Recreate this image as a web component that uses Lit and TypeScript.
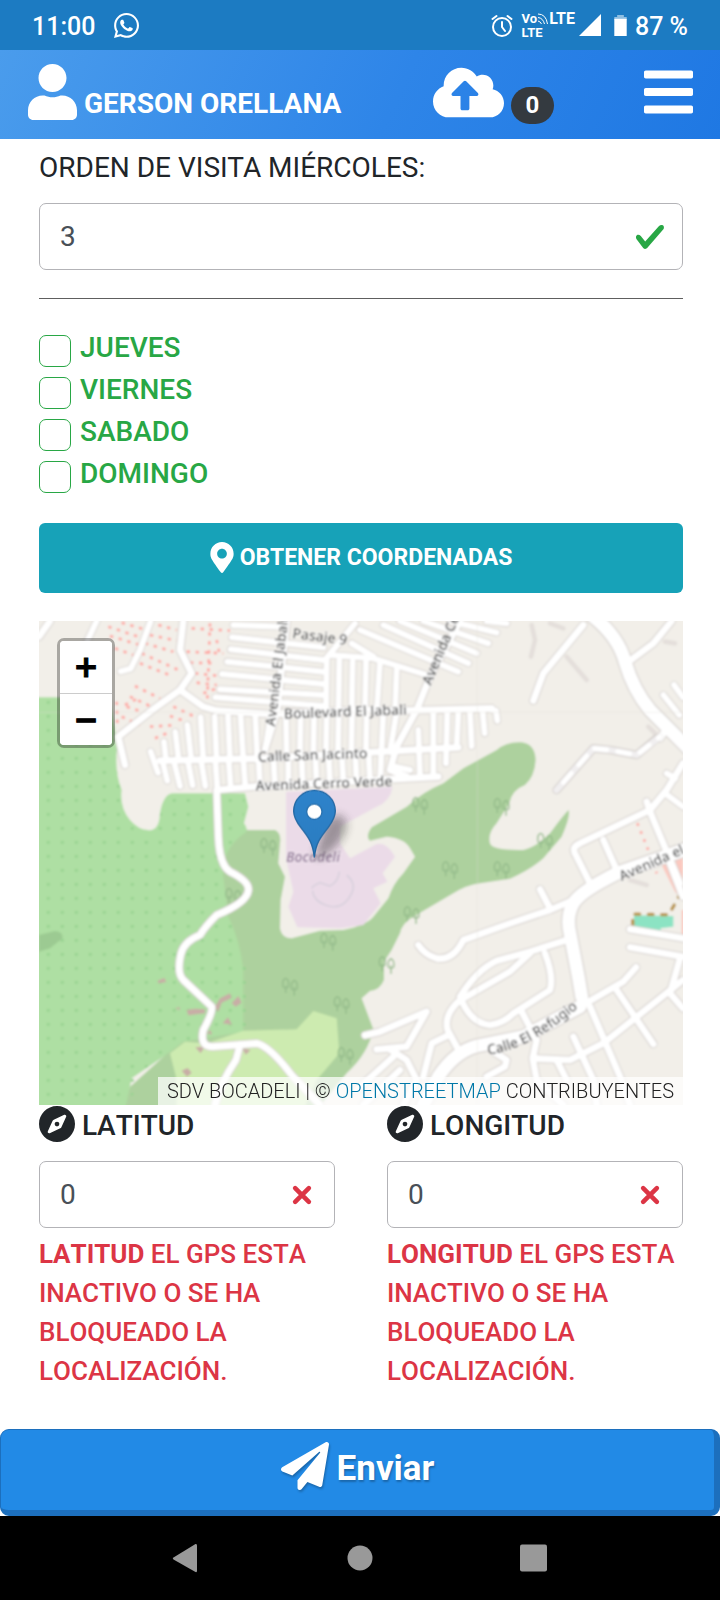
import { LitElement, html, svg, css } from "lit";
import { customElement, state } from "lit/decorators.js";

const ICONS = {
  whatsapp: { box: "0 32 448 448", d: "M380.9 97.1C339 55.1 283.2 32 223.9 32c-122.4 0-222 99.6-222 222 0 39.1 10.2 77.3 29.6 111L0 480l117.7-30.9c32.4 17.7 68.9 27 106.1 27h.1c122.3 0 224.1-99.6 224.1-222 0-59.3-25.2-115-67.1-157zm-157 341.6c-33.2 0-65.7-8.9-94-25.7l-6.7-4-69.8 18.3L72 359.2l-4.4-7c-18.5-29.4-28.2-63.3-28.2-98.2 0-101.7 82.8-184.5 184.6-184.5 49.3 0 95.6 19.2 130.4 54.1 34.8 34.9 56.2 81.2 56.1 130.5 0 101.8-84.9 184.6-186.6 184.6zm101.2-138.2c-5.5-2.8-32.8-16.2-37.9-18-5.1-1.9-8.8-2.8-12.5 2.8-3.7 5.6-14.3 18-17.6 21.8-3.2 3.7-6.5 4.2-12 1.4-32.6-16.3-54-29.1-75.5-66-5.7-9.8 5.7-9.1 16.3-30.3 1.8-3.7.9-6.9-.5-9.7-1.4-2.8-12.5-30.1-17.1-41.2-4.5-10.8-9.1-9.3-12.5-9.5-3.2-.2-6.9-.2-10.6-.2-3.7 0-9.7 1.4-14.8 6.9-5.1 5.6-19.4 19-19.4 46.3 0 27.3 19.9 53.7 22.6 57.4 2.8 3.7 39.1 59.7 94.8 83.8 35.2 15.2 49 16.5 66.6 13.9 10.7-1.6 32.8-13.4 37.4-26.4 4.6-13 4.6-24.1 3.2-26.4-1.3-2.5-5-3.9-10.5-6.6z" },
  user: { box: "0 0 448 512", d: "M224 256c70.7 0 128-57.3 128-128S294.7 0 224 0 96 57.3 96 128s57.3 128 128 128zm89.6 32h-16.7c-22.2 10.2-46.9 16-72.9 16s-50.6-5.8-72.9-16h-16.7C60.2 288 0 348.2 0 422.4V464c0 26.5 21.5 48 48 48h352c26.5 0 48-21.5 48-48v-41.6c0-74.2-60.2-134.4-134.4-134.4z" },
  cloud: { box: "0 0 640 512", d: "M537.6 226.6c4.1-10.7 6.4-22.4 6.4-34.6 0-53-43-96-96-96-19.7 0-38.1 6-53.3 16.2C367 64.2 315.3 32 256 32c-88.4 0-160 71.6-160 160 0 2.7.1 5.4.2 8.1C40.2 219.8 0 273.2 0 336c0 79.5 64.5 144 144 144h368c70.7 0 128-57.3 128-128 0-61.9-44-113.6-102.4-125.4zM393.4 288H328v112c0 8.8-7.2 16-16 16h-48c-8.8 0-16-7.2-16-16V288h-65.4c-14.3 0-21.4-17.2-11.3-27.3l105.4-105.4c6.2-6.2 16.4-6.2 22.6 0l105.4 105.4c10.1 10.1 2.9 27.3-11.3 27.3z" },
  bars: { box: "0 0 448 512", d: "M16 132h416c8.8 0 16-7.2 16-16V76c0-8.8-7.2-16-16-16H16C7.2 60 0 67.2 0 76v40c0 8.8 7.2 16 16 16zm0 160h416c8.8 0 16-7.2 16-16v-40c0-8.8-7.2-16-16-16H16c-8.8 0-16 7.2-16 16v40c0 8.8 7.2 16 16 16zm0 160h416c8.8 0 16-7.2 16-16v-40c0-8.8-7.2-16-16-16H16c-8.8 0-16 7.2-16 16v40c0 8.8 7.2 16 16 16z" },
  marker: { box: "0 0 384 512", d: "M172.268 501.67C26.97 291.031 0 269.413 0 192 0 85.961 85.961 0 192 0s192 85.961 192 192c0 77.413-26.97 99.031-172.268 309.67-9.535 13.774-29.93 13.773-39.464 0zM192 272c44.183 0 80-35.817 80-80s-35.817-80-80-80-80 35.817-80 80 35.817 80 80 80z" },
  compass: { box: "0 8 496 496", d: "M225.38 233.37c-12.5 12.5-12.5 32.76 0 45.25 12.49 12.5 32.76 12.5 45.25 0 12.5-12.5 12.5-32.76 0-45.25-12.5-12.49-32.76-12.49-45.25 0zM248 8C111.03 8 0 119.03 0 256s111.03 248 248 248 248-111.03 248-248S384.97 8 248 8zm126.14 148.05L308.17 300.4a31.938 31.938 0 0 1-15.77 15.77l-144.34 65.97c-16.65 7.61-33.81-9.55-26.2-26.2l65.98-144.35a31.938 31.938 0 0 1 15.77-15.77l144.34-65.97c16.65-7.6 33.8 9.55 26.19 26.2z" },
  plane: { box: "0 0 512 512", d: "M476 3.2L12.5 270.6c-18.1 10.4-15.8 35.6 2.2 43.2L121 358.4l287.3-253.2c5.5-4.9 13.3 2.6 8.6 8.3L176 407v80.5c0 23.6 28.5 32.9 42.5 15.8L282 426l124.6 52.2c14.2 6 30.4-2.9 33-18.2l72-432C515 7.8 493.3-6.8 476 3.2z" },
  valid: { box: "0 0 8 8", d: "M2.3 6.73L.6 4.53c-.4-1.04.46-1.4 1.1-.8l1.1 1.4 3.4-3.8c.6-.63 1.6-.27 1.2.7l-4 4.6c-.43.5-.8.4-1.1.1z" },
};

const icon = (name: keyof typeof ICONS, cls: string) =>
  html`<svg class=${cls} viewBox=${ICONS[name].box} fill="currentColor" aria-hidden="true"><path d=${ICONS[name].d} /></svg>`;

/* Street geometry, in map units (three per CSS pixel). */
const ALLEYS = [
  // north-west lots
  "M200 33L172 92", "M362 33L330 120L302 176L272 184",
  // passages east of Avenida El Jabali
  "M610 45L760 50", "M606 82L880 112", "M602 118L880 150", "M592 155L880 185", "M576 192L880 222", "M570 238L880 255", "M556 262L880 288",
  "M885 150L975 40", "M965 100L1030 140",
  "M990 60L1285 185", "M1060 45L1315 160", "M1110 33L1340 130", "M1180 33L1375 100", "M1260 33L1400 68", "M1370 33L1430 40",
  "M900 135L1030 145L1200 198",
  "M890 150L888 310", "M928 150L925 310", "M968 155L965 310", "M1008 155L1005 310", "M1050 155L1040 310", "M1100 180L1095 310",
  // blocks between the boulevard and Calle San Jacinto
  "M402 396L408 450", "M436 366L446 450", "M472 345L484 450", "M512 322L520 450", "M554 320L560 450", "M594 320L600 450", "M632 320L640 450", "M676 318L682 450",
  "M722 316L706 420", "M768 315L770 440", "M812 315L810 440", "M852 315L850 440", "M890 310L888 435", "M926 310L924 435", "M966 310L964 430", "M1010 310L1008 430",
  "M1060 305L1050 520", "M1100 305L1080 425", "M1165 360L1170 500", "M1210 305L1210 500", "M1252 305L1248 460", "M1285 305L1280 410", "M1320 305L1325 408", "M1358 305L1364 370", "M1380 298L1398 302L1402 332",
  // blocks south of Calle San Jacinto
  "M362 425L384 488", "M398 455L412 512", "M432 455L450 528", "M474 455L488 526", "M514 455L526 528", "M556 450L562 535", "M596 450L602 530", "M640 450L646 530", "M686 450L690 530",
  "M730 440L735 525", "M775 440L775 520", "M815 440L818 520", "M856 440L860 520", "M896 440L900 518", "M936 440L940 515", "M976 440L980 515", "M1016 435L1020 512", "M1095 470L1140 480",
  // eastern edge
  "M1900 255L1948 315", "M1932 225L1959 262", "M1910 490L1936 505", "M1905 550L1959 590",
];

const STREETS = [
  "M27 80L60 33",
  "M460 33L450 120L485 190L450 240L380 290L265 380L285 465",
  "M450 240L520 290L560 302L720 312L1000 300L1120 302L1385 295",
  "M390 452L700 445L1285 412",
  "M680 530L1225 500",
  "M690 528L560 540L565 680Q568 765 600 785Q660 815 655 842Q650 878 560 915Q525 950 510 975Q460 995 452 1035Q440 1090 460 1110L545 1190Q550 1205 520 1260Q508 1312 550 1310L680 1300Q720 1310 785 1395L870 1485",
  "M630 1305L618 1350Q570 1420 555 1485",
  "M770 33L742 300L706 415",
  "M1290 33L1200 200L1160 300L1100 410L1080 480L1130 500",
  "M1660 45L1540 190L1510 272",
  "M1800 152L1870 100L1925 33",
  "M1900 370L1890 385",
  "M1959 460L1910 540L1860 600L1650 700Q1620 712 1640 740L1680 820", "M1850 575L1862 610L1950 820", "M1720 690L1760 780", "M1920 760L1959 860",
  "M1630 870L1560 900L1440 940L1300 990Q1270 1052 1220 1045Q1185 1035 1165 1005", "M1530 838L1560 895",
  "M1610 990L1500 1025L1400 1052Q1340 1080 1290 1160Q1320 1240 1380 1245Q1420 1240 1450 1210L1560 1140Q1572 1100 1545 1030",
  "M1295 1168L1440 1085L1500 1030", "M1290 1170Q1240 1215 1253 1260L1280 1310",
  "M1650 1190L1780 1115L1818 1072", "M1680 1190L1770 1400L1800 1485", "M1760 1140L1870 1302",
  "M1959 1110L1720 1300L1620 1350L1510 1345", "M1475 1205L1520 1290L1508 1345L1520 1410L1600 1485", "M1630 1280L1690 1410L1700 1485", "M1580 1350L1610 1410",
  "M1800 958L1959 985", "M1800 1012L1959 1040", "M1950 1045L1920 1150L1959 1195",
  "M1005 1276L1050 1265L1190 1205L1130 1310L1040 1318", "M1080 1318L1130 1350L1160 1410L1120 1485",
  "M1250 1278L1205 1300L1180 1400", "M980 1440L1090 1340", "M1000 1485L1110 1380", "M1390 1325L1430 1350L1425 1370L1370 1400",
];

const AVENUES = [
  "M1690 20Q1765 80 1785 155Q1810 240 1860 300L1975 415",
  "M1975 715L1760 790Q1650 845 1630 880Q1608 920 1620 970L1645 1100L1655 1160",
  "M1180 1485L1225 1400Q1275 1325 1340 1308L1480 1280L1650 1190",
];

const CANOPIES: [number, number][] = [
  [690, 685], [585, 835], [870, 970], [755, 1105], [910, 1160], [922, 1312], [1145, 562], [1390, 565], [1520, 670], [1235, 755], [1390, 755], [1120, 890], [1045, 1040],
];

/* start, end of every dotted garden row */
const GARDENS = [
  "M275 38L350 60", "M240 78L330 105", "M235 50L330 82", "M255 115L310 135", "M330 160L430 200", "M335 130L450 182", "M345 100L430 125", "M385 45L440 60", "M360 75L440 92",
  "M485 55L600 62", "M540 40L532 265", "M470 125L580 130", "M560 90L568 130", "M480 158L560 160", "M495 190L570 198", "M500 218L560 225", "M520 250L560 235",
  "M315 228L390 265", "M300 260L385 300", "M290 290L350 310", "M260 275L262 345", "M275 320L330 345", "M430 290L490 318", "M420 318L470 335", "M360 350L440 345", "M375 385L410 370", "M285 285L330 262",
];

@customElement("street-map")
export class StreetMap extends LitElement {
  static styles = css`
    :host { display: block; position: relative; height: 484px; overflow: hidden; background: #f2efe9; }
    .canvas { display: block; width: 100%; height: 100%; }
    .road { fill: none; stroke-linecap: round; stroke-linejoin: round; }
    .casing { stroke: #d6d1ce; }
    .surface { stroke: #fff; }
    .alley.casing { stroke-width: 23; }
    .alley.surface { stroke-width: 18; }
    .street.casing { stroke-width: 26; }
    .street.surface { stroke-width: 20; }
    .avenue.casing { stroke-width: 46; }
    .avenue.surface { stroke-width: 39; }
    .name { font: 500 42px "Noto Sans", "Open Sans", sans-serif; fill: #4a4a4a; stroke: #fff; stroke-opacity: .6; stroke-width: 6; paint-order: stroke; }
    .place { font-style: italic; fill: #84668c; stroke-opacity: .35; }
    .zoom { position: absolute; top: 17px; left: 18px; width: 52px; border: 3px solid rgba(0, 0, 0, .3); border-radius: 7px; background: #fff; background-clip: padding-box; overflow: hidden; }
    .zoom button { display: block; box-sizing: border-box; width: 100%; height: 52px; padding: 0; border: 0; background: #fff; color: #000; font: bold 30px/48px "DejaVu Sans", sans-serif; -webkit-text-stroke: 1px #000; }
    .zoom button + button { border-top: 1px solid #ccc; }
    .credit { position: absolute; right: 0; bottom: 0; padding: 0 9px; background: rgba(255, 255, 255, .72); color: #222; font-size: 20px; line-height: 28px; font-weight: 300; white-space: nowrap; }
    .credit a { color: #0078a8; text-decoration: none; }
  `;

  private roads(kind: string, list: string[], layer: string) {
    return list.map((d) => svg`<path class="road ${kind} ${layer}" d=${d} />`);
  }

  render() {
    return html`
      <svg class="canvas" viewBox="27 33 1932 1452" preserveAspectRatio="xMidYMid slice" role="img" aria-label="Mapa">
        <defs>
          <pattern id="dots" width="42" height="42" patternUnits="userSpaceOnUse"><circle cx="13" cy="25" r="5" fill="#98d391" /></pattern>
          <filter id="soft" x="0" y="0" width="1" height="1"><feGaussianBlur stdDeviation="2.6" /></filter>
          <filter id="shade" x="-1" y="-1" width="3" height="3"><feGaussianBlur stdDeviation="14" /></filter>
          <linearGradient id="pin" x1="0" y1="0" x2="0" y2="1"><stop offset="0" stop-color="#2e83cb" /><stop offset="1" stop-color="#2a7cc0" /></linearGradient>
          <path id="refugio" d="M1374 1334Q1450 1325 1530 1276Q1600 1235 1720 1130" />
        </defs>
        <g filter="url(#soft)">
          <rect x="0" y="0" width="2000" height="1520" fill="#f2efe9" />
          <path fill="#add19e" d="M580 660L735 660Q755 670 750 700L745 760L765 800L752 870L750 955Q755 985 785 985L870 962L940 960Q1010 945 1030 920L1075 865Q1090 820 1120 790L1155 740L1140 715Q1125 685 1070 680L1020 692Q1005 680 1025 652L1130 590Q1180 545 1240 520L1300 475L1400 420Q1430 394 1475 397Q1515 402 1517 450Q1514 500 1485 525Q1445 540 1438 580L1400 640Q1372 670 1380 700Q1385 722 1480 720Q1520 710 1560 670Q1600 615 1616 600Q1622 620 1595 680L1540 745Q1500 780 1440 806L1350 820Q1310 825 1270 850L1150 920Q1115 940 1110 970L1085 1020L1062 1055L1062 1110Q1050 1140 1020 1143L995 1165L1030 1258Q1015 1330 950 1390L860 1500H270L300 1430L400 1340Z" />
          <path fill="#aedfa3" d="M20 262H240L262 410Q252 480 275 540Q268 590 300 630Q330 665 365 660Q388 655 390 610Q400 550 430 550H645L655 590L642 640Q660 662 640 672Q575 720 580 800L595 920Q630 990 640 1080L640 1265L460 1295L400 1340L305 1405L285 1500H20Z" />
          <path fill="url(#dots)" d="M20 262H240L262 410Q252 480 275 540Q268 590 300 630Q330 665 365 660Q388 655 390 610Q400 550 430 550H645L640 650L580 760L595 920Q630 990 650 1080L650 1265L460 1295L400 1340L285 1485H20Z" />
          <path fill="#9cca92" d="M27 975L75 963Q100 965 98 985L60 1015L27 1025Z" />
          <path fill="#cdebb0" d="M420 1330L465 1295L530 1300L640 1262L800 1258L850 1203L920 1225L928 1330L860 1410L820 1500H440L438 1400Z" />
          <path fill="#ebdbe8" d="M768 545L1088 530Q1080 575 1040 590L930 650V700L960 745L1040 702Q1070 695 1095 740L1058 790L1072 815L1030 835L1052 880L1000 945L930 955L802 952L775 890L790 845L768 745Z" />
          <path fill="none" stroke="#d9d1dd" stroke-width="5" d="M845 835Q850 825 870 818L900 828Q925 815 928 785M950 795Q980 820 965 850Q940 900 895 888Q850 875 848 842" />
          <g fill="#fcc9c0"><path d="M1890 755L1959 710V870L1935 845Z" /><path d="M1955 900h10v80h-10z" /></g>
          <g fill="#c8aea6"><path d="M383 1112l20-8 6 12-24 4zM470 1200l25-4 30 2v12l-50 6zM555 1190l15-25 30-15 5 14-30 14-10 28zM605 1180l20-22 10 20-18 12zM578 1240l16-18 12 22zM455 1382l18-8 12 14-14 12zM496 1312l28-2-12 20zM637 1315l25 5-15 14zM530 1270l12-10 4 14zM435 1195l14-3v8z" /></g>
          <path fill="#8ce3c3" d="M1812 916L1930 918V950L1892 955V965L1810 955Z" />
          <path fill="none" stroke="#b9964c" stroke-width="10" stroke-linecap="round" stroke-dasharray="14 26" d="M1808 945V912L1915 914L1930 890L1952 850" />
          <path fill="none" stroke="#ffa5a0" stroke-width="8" stroke-dasharray="10 17" d=${GARDENS.join("")} />
          <path fill="none" stroke="#ffa5a0" stroke-width="8" stroke-dasharray="8 18" d="M1822 640L1865 745L1880 790" />
          <path fill="none" stroke="#e4dfdb" stroke-width="14" stroke-linecap="round" d="M1505 45L1515 90L1503 140M1610 140L1670 210M1560 40L1600 55M1855 350L1880 375M1905 95L1935 100M1800 810L1850 825" />
          <g fill="none" stroke="#93ba8a" stroke-width="4">
            ${CANOPIES.map(([x, y]) => svg`<path transform="translate(${x} ${y})" d="M12 44V22M4 26Q0 4 12 0Q24 4 20 26Q12 32 4 26M38 52V26M30 32Q26 12 38 6Q50 12 46 32Q38 38 30 32" />`)}
          </g>
          ${this.roads("alley", ALLEYS, "casing")}
          ${this.roads("street", STREETS, "casing")}
          ${this.roads("avenue", AVENUES, "casing")}
          ${this.roads("alley", ALLEYS, "surface")}
          ${this.roads("street", STREETS, "surface")}
          ${this.roads("avenue", AVENUES, "surface")}
          <path class="road" stroke="#d6d1ce" stroke-width="26" d="M1580 540L1690 415L1740 420L1820 435L1880 385" />
          <path class="road" stroke="#f1eff0" stroke-width="19" d="M1580 540L1690 415L1740 420L1820 435L1890 380" />
          <path class="road" stroke="#fff" stroke-width="15" stroke-dasharray="36 34" d="M1600 517L1690 415L1740 420L1820 435L1890 380" />
          <path stroke="#e4e0da" stroke-width="2" d="M27 307H1959M1342 33V1485" opacity=".55" />
          <text class="name" transform="translate(786 84) rotate(7)">Pasaje 9</text>
          <text class="name" transform="translate(735 350) rotate(-83)">Avenida El Jabali</text>
          <text class="name" transform="translate(1202 228) rotate(-67)">Avenida Cerro</text>
          <text class="name" transform="translate(762 326) rotate(-2)">Boulevard El Jabali</text>
          <text class="name" transform="translate(684 455) rotate(-2)">Calle San Jacinto</text>
          <text class="name" transform="translate(677 542) rotate(-2)">Avenida Cerro Verde</text>
          <text class="name" transform="translate(1775 814) rotate(-24)">Avenida el</text>
          <text class="name"><textPath href="#refugio">Calle El Refugio</textPath></text>
          <text class="name place" x="768" y="757">Bocadeli</text>
        </g>
        <path d="M853 745L885 640Q930 590 950 640Q950 690 880 740Z" fill="#222" opacity=".4" filter="url(#shade)" />
        <path d="M853 742C848 700 838 685 812 652C798 634 791 620 791 603C791 568 819 541 853 541C888 541 916 568 916 603C916 620 908 634 895 652C869 685 858 700 853 742Z" fill="url(#pin)" stroke="#2368a3" stroke-width="4" />
        <circle cx="853" cy="605" r="23" fill="#fff" stroke="#2a72b0" stroke-width="4" />
      </svg>
      <div class="zoom">
        <button type="button" aria-label="Acercar">+</button>
        <button type="button" aria-label="Alejar">−</button>
      </div>
      <div class="credit">SDV BOCADELI | © <a href="#osm">OPENSTREETMAP</a> CONTRIBUYENTES</div>
    `;
  }
}

@customElement("app-root")
export class AppRoot extends LitElement {
  @state() private days = ["JUEVES", "VIERNES", "SABADO", "DOMINGO"];
  @state() private axes = ["LATITUD", "LONGITUD"];

  static styles = css`
    :host { display: block; background: #fff; color: #212529; font-family: Roboto, "Liberation Sans", sans-serif; }
    * { box-sizing: border-box; }
    svg { flex: none; }
    button { font-family: inherit; }

    .status { display: flex; align-items: center; height: 50px; padding: 3px 32px 0 32px; background: #1c7bc2; color: #fff; font-size: 25px; font-weight: 500; }
    .status .whatsapp { width: 25px; height: 25px; margin: 0 auto 3px 19px; }
    .alarm { width: 22px; height: 24px; margin: 0 9px 2px 0; }
    .volte { display: grid; grid-template-columns: auto auto; align-items: center; column-gap: 1px; margin-bottom: 1px; font-size: 13px; line-height: 14px; font-weight: 700; }
    .volte .net { font-size: 16px; }
    .volte .waves { width: 10px; height: 12px; }
    .vo { display: flex; align-items: center; gap: 1px; }
    .signal { width: 22px; height: 22px; margin: 0 13px 3px 4px; }
    .battery { width: 13px; height: 21px; margin: 0 8px 2px 0; }

    .topbar { display: flex; align-items: flex-start; height: 89px; padding: 14px 27px 0 28px; background: linear-gradient(115deg, #4a9cec, #2e85e8 55%, #1f78e3); color: #fff; }
    .topbar .user { width: 49px; height: 56px; }
    .topbar .who { margin: 0 auto 0 7px; padding-top: 20px; font-size: 28px; line-height: 40px; font-weight: 700; }
    .topbar .cloud { width: 71px; height: 57px; }
    .badge { display: block; min-width: 43px; margin: 23px 90px 0 7px; border-radius: 20px; background: #343a40; font-size: 24px; line-height: 37px; font-weight: 700; text-align: center; }
    .icon-btn { display: block; padding: 0; border: 0; background: none; color: inherit; }
    .topbar .bars { display: block; width: 49px; height: 56px; }

    .page { padding: 8px 37px 38px 39px; }
    .label { display: flex; align-items: center; gap: 8px; font-size: 28px; line-height: 42px; font-weight: 400; }
    .field { display: grid; margin-top: 14px; }
    .field > * { grid-area: 1 / 1; }
    .field input { width: 100%; height: 67px; padding: 0 60px 0 20px; border: 1px solid #b3b3b7; border-radius: 7px; background: #fff; color: #495057; font: 28px/42px Roboto, "Liberation Sans", sans-serif; }
    .mark { align-self: center; justify-self: end; width: 32px; height: 32px; margin-right: 17px; }
    .ok { color: #28a745; }
    .bad { color: #dc3545; }
    .rule { height: 1px; margin: 28px 0; border: 0; background: #5e5e5e; }

    .days { margin-bottom: 28px; }
    .day { display: flex; gap: 9px; color: #28a745; font-size: 28px; line-height: 42px; font-weight: 500; }
    .day input { appearance: none; flex: none; width: 32px; height: 32px; margin: 8px 0 0; border: 1px solid #28a745; border-radius: 7px; background: #fff; }

    .locate { display: flex; align-items: center; justify-content: center; gap: 6px; width: 100%; height: 70px; margin-bottom: 28px; padding: 0 0 2px; border: 0; border-radius: 6px; background: #17a2b8; color: #fff; font-size: 23px; font-weight: 700; }
    .locate .pin { width: 24px; height: 31px; }

    .axes { display: grid; grid-template-columns: 1fr 1fr; gap: 52px; }
    .compass { width: 36px; height: 36px; margin-bottom: 4px; }
    .axes .label { font-weight: 500; font-kerning: none; gap: 7px; }
    .error { margin: 7px 0 0; color: #dc3545; font-size: 26px; line-height: 39px; font-weight: 500; font-kerning: none; }
    .error strong { font-weight: 700; }

    .send { display: flex; align-items: center; justify-content: center; gap: 8px; width: 100%; height: 87px; padding: 0 0 3px; border: 1px solid #1c6fbd; border-width: 1px 6px 6px 1px; border-radius: 9px; background: #228ae6; color: #fff; font-size: 35px; font-weight: 700; text-shadow: 1px 2px 2px rgba(0, 0, 0, .25); }
    .plane { width: 48px; height: 48px; margin-bottom: 5px; filter: drop-shadow(1px 2px 1px rgba(0, 0, 0, .25)); }

    .system { display: flex; justify-content: space-between; align-items: center; height: 84px; padding: 0 172px; background: #000; color: #999; }
    .system svg { display: block; width: 28px; height: 30px; }
  `;

  render() {
    return html`
      <div class="status">
        <span>11:00</span>
        ${icon("whatsapp", "whatsapp")}
        <svg class="alarm" viewBox="0 0 22 24" fill="none" stroke="#fff" stroke-width="2" stroke-linecap="round" aria-hidden="true"><circle cx="11" cy="13" r="9" /><path d="M11 8v5l3 4M1.500 5l4-3M20.500 5l-4-3" /></svg>
        <div class="volte">
          <span class="vo">Vo<svg class="waves" viewBox="0 0 10 12" fill="none" stroke="#fff" stroke-width="1" aria-hidden="true"><path d="M0 1Q8 1 9.500 11M0 4.500Q5 5 6.500 11M0 8Q2.500 8.500 3.500 11" /></svg></span><span class="net">LTE</span>
          <span>LTE</span>
        </div>
        <svg class="signal" viewBox="0 0 22 22" aria-hidden="true"><path d="M22 0V22H0Z" fill="#fff" /></svg>
        <svg class="battery" viewBox="0 0 13 22" aria-hidden="true"><path d="M3 0h7v2h3v3H0V2h3z" fill="#8fbfe2" /><path d="M0 4h13v18H0z" fill="#fff" /></svg>
        <span>87 %</span>
      </div>
      <header class="topbar">
        ${icon("user", "user")}
        <span class="who">GERSON ORELLANA</span>
        ${icon("cloud", "cloud")}
        <span class="badge">0</span>
        <button class="icon-btn" type="button" aria-label="Menú">${icon("bars", "bars")}</button>
      </header>
      <main class="page">
        <label class="label" for="orden">ORDEN DE VISITA MIÉRCOLES:</label>
        <div class="field">
          <input id="orden" type="text" inputmode="numeric" value="3" />
          ${icon("valid", "mark ok")}
        </div>
        <hr class="rule" />
        <div class="days">
          ${this.days.map((d) => html`<label class="day"><input type="checkbox" /><span>${d}</span></label>`)}
        </div>
        <button class="locate" type="button">${icon("marker", "pin")}OBTENER COORDENADAS</button>
        <street-map></street-map>
        <div class="axes">
          ${this.axes.map((a) => html`
            <div>
              <label class="label" for=${a}>${icon("compass", "compass")}${a}</label>
              <div class="field">
                <input id=${a} type="text" value="0" aria-describedby="${a}-error" />
                <svg class="mark bad" viewBox="-2 -2 7 7" fill="none" stroke="currentColor" stroke-linecap="round" aria-hidden="true"><path d="M0 0l3 3m0-3L0 3" /></svg>
              </div>
              <p class="error" id="${a}-error"><strong>${a}</strong> EL GPS ESTA INACTIVO O SE HA BLOQUEADO LA LOCALIZACIÓN.</p>
            </div>`)}
        </div>
      </main>
      <button class="send" type="submit">${icon("plane", "plane")}Enviar</button>
      <nav class="system">
        <button class="icon-btn" type="button" aria-label="Atrás"><svg viewBox="0 0 28 30" fill="currentColor"><path d="M25 2.500V28Q25 29.500 23.500 29L1.500 16.500Q0 15.500 1.500 14.500L23.500 1Q25 .500 25 2.500Z" /></svg></button>
        <button class="icon-btn" type="button" aria-label="Inicio"><svg viewBox="0 0 28 30" fill="currentColor"><circle cx="14" cy="15" r="12.500" /></svg></button>
        <button class="icon-btn" type="button" aria-label="Recientes"><svg viewBox="0 0 28 30" fill="currentColor"><rect x="0" y="1.500" width="27" height="27" rx="2" /></svg></button>
      </nav>
    `;
  }
}
